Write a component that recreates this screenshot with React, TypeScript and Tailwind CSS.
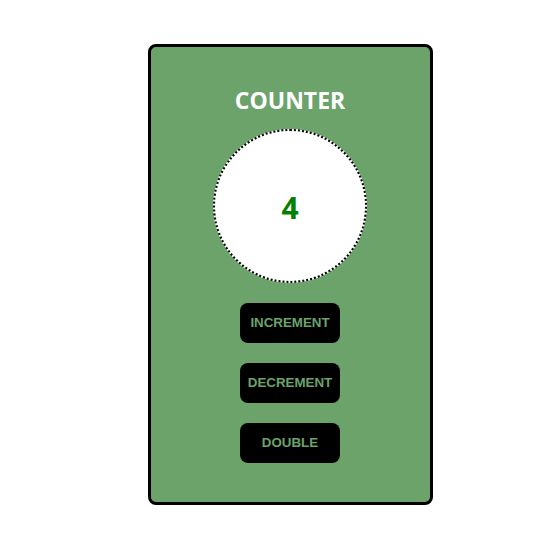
export default function App() {
  return (
    <div className="flex justify-center pl-5 pt-[44px] font-['Liberation_Sans',Arial,sans-serif]">
      <div className="flex h-[461px] w-[285px] flex-col items-center rounded-[8px] border-[3px] border-black bg-[#6ba36b]">
        <h1 className="mt-[39px] font-['Open_Sans',sans-serif] text-[23px] font-bold leading-[28px] text-white">
          COUNTER
        </h1>
        <div className="mt-[15px] flex h-[154px] w-[154px] items-center justify-center rounded-full border-2 border-dotted border-black bg-white">
          <span className="mt-[3px] font-['Open_Sans',sans-serif] text-[30px] font-bold text-[#008000]">4</span>
        </div>
        <div className="mt-5 flex flex-col gap-5">
          {["INCREMENT", "DECREMENT", "DOUBLE"].map(function renderButton(label) {
            return (
              <button
                key={label}
                className="h-10 w-[100px] rounded-[8px] bg-black text-[13.33px] font-bold text-[#6ba36b]"
              >
                {label}
              </button>
            );
          })}
        </div>
      </div>
    </div>
  );
}
